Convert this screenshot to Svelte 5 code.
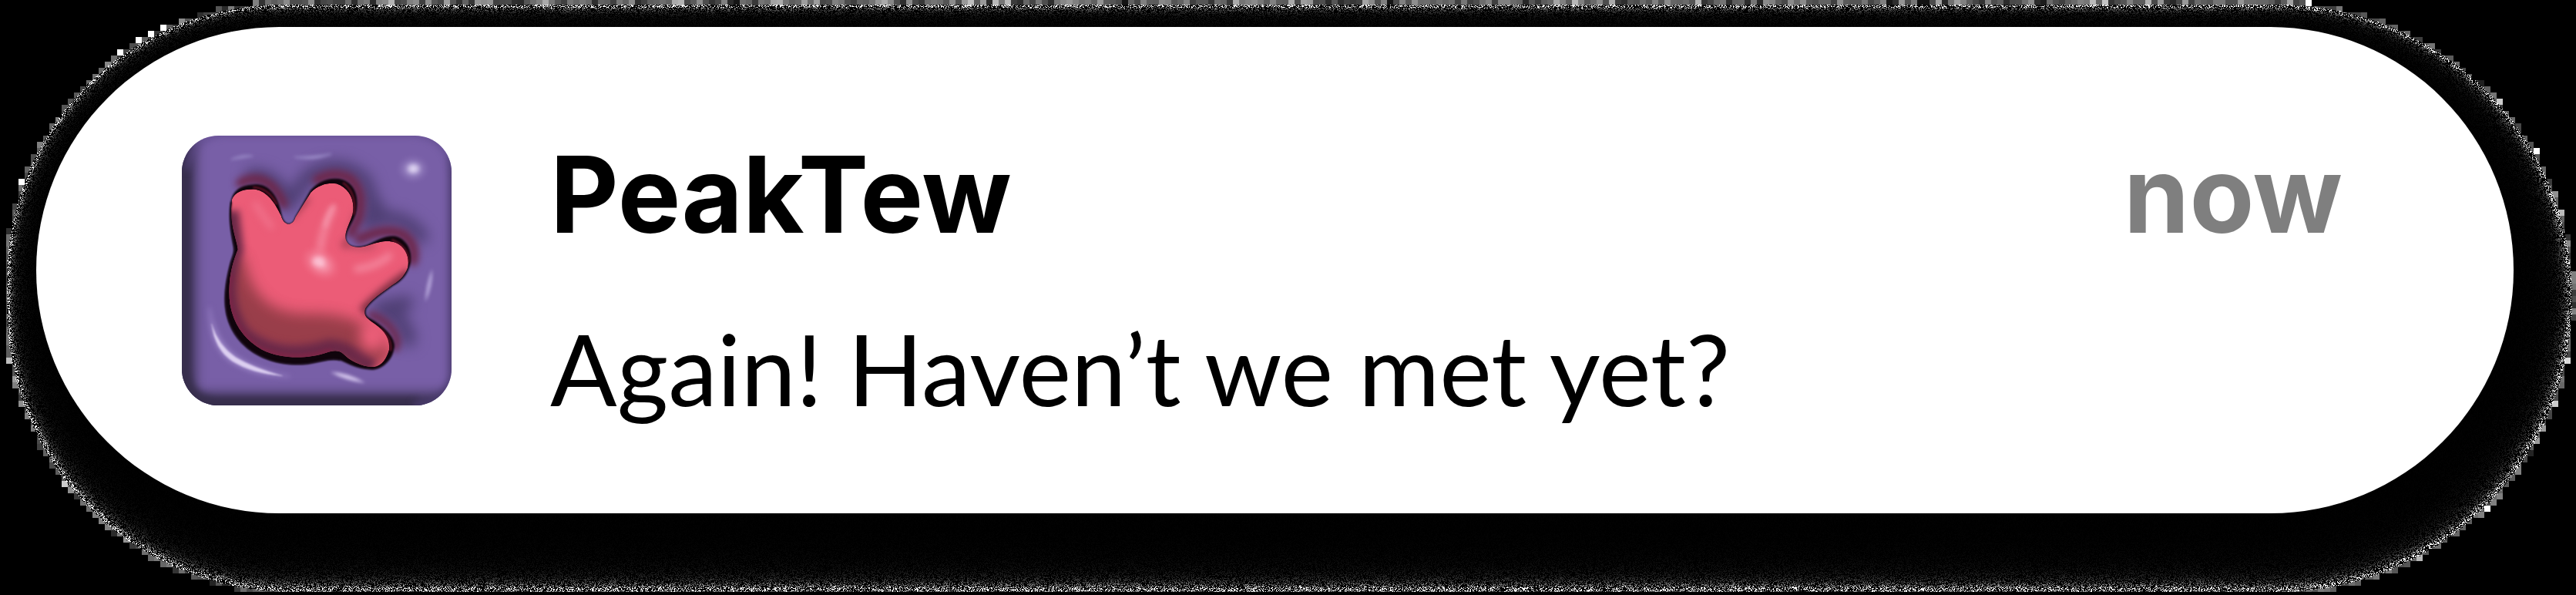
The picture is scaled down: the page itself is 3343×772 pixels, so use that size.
<script>
  import { onMount } from 'svelte';

  let grain;

  const BLOCK = 8;
  const CARD = { left: 47, top: 35, right: 81, bottom: 106 };
  const EDGE = { left: 9, top: 6, right: 6, bottom: 5 };

  function makeRandom(seed) {
    let s = seed;
    return () => {
      s = (s + 0x6d2b79f5) | 0;
      let t = Math.imul(s ^ (s >>> 15), 1 | s);
      t = (t + Math.imul(t ^ (t >>> 7), 61 | t)) ^ t;
      return ((t ^ (t >>> 14)) >>> 0) / 4294967296;
    };
  }

  // Depth inside a rounded box; negative when the point is outside it.
  function depth(x, y, l, t, r, b, radius) {
    const hw = (r - l) / 2;
    const hh = (b - t) / 2;
    const k = Math.min(radius, hw, hh);
    const qx = Math.abs(x - (l + r) / 2) - hw + k;
    const qy = Math.abs(y - (t + b) / 2) - hh + k;
    return k - Math.hypot(Math.max(qx, 0), Math.max(qy, 0)) - Math.min(Math.max(qx, qy), 0);
  }

  function paint() {
    const w = grain.clientWidth;
    const h = grain.clientHeight;
    if (!w || !h) return;
    grain.width = w;
    grain.height = h;
    const ctx = grain.getContext('2d');
    const image = ctx.createImageData(w, h);
    const out = new Uint32Array(image.data.buffer);
    const random = makeRandom(41);
    const grey = (v) => ((255 << 24) | (v << 16) | (v << 8) | v) >>> 0;

    for (let by = 0; by < h; by += BLOCK) {
      for (let bx = 0; bx < w; bx += BLOCK) {
        const empty = [];
        let sum = 0;
        let count = 0;
        for (let y = by; y < Math.min(by + BLOCK, h); y++) {
          for (let x = bx; x < Math.min(bx + BLOCK, w); x++) {
            const radius = x > w / 2 ? 380 : y < h / 2 ? 355 : 368;
            const d = depth(x, y, EDGE.left, EDGE.top, w - EDGE.right, h - EDGE.bottom, radius);
            if (d + random() * 2 - 1 <= 0) {
              empty.push(y * w + x);
              continue;
            }
            const c = -depth(x, y, CARD.left, CARD.top, w - CARD.right, h - CARD.bottom, 316);
            let v = 0;
            if (c > -3) {
              const scale = 3 + 0.045 * (Math.max(d, 0) + Math.max(c, 0));
              const level = 1 + Math.floor((Math.max(d, 0) / scale) ** 2 + random() * 0.8);
              v = random() < 0.38 ? Math.round(255 / level) : 0;
            }
            out[y * w + x] = grey(v);
            sum += v;
            count++;
          }
        }
        const mean = count ? Math.round(sum / count) : 0;
        for (const i of empty) out[i] = grey(mean);
      }
    }
    ctx.putImageData(image, 0, 0);
  }

  onMount(() => {
    paint();
    const watcher = new ResizeObserver(paint);
    watcher.observe(grain);
    return () => watcher.disconnect();
  });

  const blurs = [3, 6, 9, 14, 26];

  const groove =
    'M300 335C308 287 340 269 400 268C450 270 480 312 495 385C505 430 540 432 550 395L610 290C640 255 680 243 715 246C770 252 797 300 787 365C777 420 743 440 746 480C755 512 790 518 830 503C870 485 900 465 940 470C985 480 1007 530 995 580C985 620 960 645 930 660C890 690 850 715 825 750C815 775 830 785 850 795C900 825 945 870 932 910C925 950 890 985 850 987C790 985 760 965 725 950C690 940 650 955 600 963C500 975 400 945 340 880C262 795 268 690 300 570C310 540 315 530 312 510C300 450 292 400 300 335Z';
  const hand =
    'M303 325C315 295 350 283 395 286C440 295 470 335 495 390C505 430 540 430 550 395L610 298C640 268 680 258 710 264C760 280 785 330 772 385C757 430 742 450 746 480C755 512 790 518 830 505C880 488 910 483 940 493C980 510 995 550 988 590C975 625 950 645 925 660C885 690 845 715 822 750C815 775 825 785 845 800C890 830 920 860 915 910C905 945 890 970 855 978C800 975 760 950 735 925C715 908 690 915 670 922C600 945 500 950 420 910C330 860 285 770 293 660C297 600 310 560 326 520C322 480 290 420 303 325Z';
</script>

<main class="stage">
  <canvas class="grain" bind:this={grain} aria-hidden="true"></canvas>
  <article class="card">
    <svg class="icon" viewBox="108 77 1050 1050" role="img" aria-label="PeakTew">
      <defs>
        <clipPath id="tile"><rect x="108" y="77" width="1050" height="1050" rx="142" /></clipPath>
        <clipPath id="palm"><path d={hand} /></clipPath>
        {#each blurs as r}
          <filter id="b{r}" filterUnits="userSpaceOnUse" x="0" y="-30" width="1270" height="1270" color-interpolation-filters="sRGB"><feGaussianBlur stdDeviation={r} /></filter>
        {/each}
        <radialGradient id="glow"><stop offset="0" stop-color="#cdbfe6" /><stop offset=".35" stop-color="#a592cd" stop-opacity=".75" /><stop offset="1" stop-color="#7a5fa8" stop-opacity="0" /></radialGradient>
        <radialGradient id="shine"><stop offset="0" stop-color="#fbb9cc" /><stop offset=".4" stop-color="#f68ea5" stop-opacity=".75" /><stop offset="1" stop-color="#ef5f7a" stop-opacity="0" /></radialGradient>
      </defs>

      <g clip-path="url(#tile)">
        <rect x="108" y="77" width="1050" height="1050" fill="#785fa7" />
        <path d="M104 60V1136H1170" fill="none" stroke="#332b48" stroke-width="104" filter="url(#b26)" />
        <path d="M114 180V970Q114 1121 270 1121H1030" fill="none" stroke="#372e4c" stroke-width="46" filter="url(#b14)" />
        <path d="M1164 150V1010Q1150 1120 1010 1130" fill="none" stroke="#4a3b6d" stroke-width="34" filter="url(#b14)" />
        <path d="M130 210Q140 90 260 70H1010Q1140 80 1165 210" fill="none" stroke="#5b4888" stroke-width="14" filter="url(#b14)" />

        <g fill="none" stroke="#4f3f74" stroke-linecap="round" stroke-linejoin="round" filter="url(#b26)">
          <path d="M380 232Q470 225 525 340L600 235Q720 160 820 250Q860 330 830 420Q960 360 1040 470" stroke-width="56" />
          <path d="M880 380L830 300M980 730L880 750Q980 790 990 870" stroke-width="60" />
        </g>
        <g fill="none" stroke="#6d2649" stroke-linecap="round" filter="url(#b14)">
          <path d="M335 262Q370 240 415 248Q470 265 505 345" stroke-width="34" />
          <path d="M635 250Q700 210 765 245Q820 300 795 400L765 455" stroke-width="38" />
          <path d="M800 480Q900 430 970 462Q1022 500 1008 565" stroke-width="38" />
          <path d="M845 775Q920 800 945 870L940 905" stroke-width="28" />
        </g>

        <path d={groove} fill="#10040c" stroke="#10040c" stroke-width="3" filter="url(#b3)" />
        <path d="M735 260Q790 300 777 385M925 482Q990 510 992 570M385 278Q445 280 478 345M880 828Q930 870 920 915" fill="none" stroke="#541022" stroke-width="9" filter="url(#b3)" />

        <g clip-path="url(#palm)">
          <path d={hand} fill="#ec5c77" />
          <path d="M270 560Q320 860 620 850Q800 850 850 970" fill="none" stroke="#8b3942" stroke-width="160" filter="url(#b26)" opacity=".85" />
          <path d="M300 370L318 520Q250 710 345 845Q480 960 680 900Q740 895 850 980" fill="none" stroke="#6b2948" stroke-width="60" filter="url(#b14)" />
          <path d="M300 620Q265 780 400 900Q540 965 690 910" fill="none" stroke="#7a2446" stroke-width="16" filter="url(#b6)" />
          <path d="M1000 615Q895 685 815 765" fill="none" stroke="#7e2f43" stroke-width="48" filter="url(#b14)" />
          <path d="M530 400L600 320M775 470L735 510" fill="none" stroke="#a93f55" stroke-width="22" filter="url(#b14)" />
          <path d="M790 370L765 450M740 490Q780 525 860 505" fill="none" stroke="#b9485f" stroke-width="18" filter="url(#b14)" />
          <ellipse cx="848" cy="860" rx="46" ry="56" fill="#f0607b" filter="url(#b26)" />
          <path d="M695 365Q655 440 645 530M790 596Q870 585 915 545" fill="none" stroke="#f4869d" stroke-width="26" stroke-linecap="round" filter="url(#b14)" />
          <path d="M395 345Q425 390 455 430" fill="none" stroke="#f0708a" stroke-width="24" stroke-linecap="round" filter="url(#b14)" />
          <path d="M700 350Q675 390 665 430" fill="none" stroke="#f7a0b4" stroke-width="10" stroke-linecap="round" filter="url(#b9)" />
          <ellipse cx="648" cy="574" rx="92" ry="68" fill="url(#shine)" transform="rotate(35 648 574)" />
          <ellipse cx="640" cy="566" rx="22" ry="16" fill="#fbc0d2" filter="url(#b9)" />
        </g>
        <path d="M300 335C292 400 300 450 312 510C315 530 310 540 300 570C268 690 262 795 340 880C400 945 500 975 600 963C650 955 690 940 725 950" fill="none" stroke="#10040c" stroke-width="5" filter="url(#b3)" />

        <ellipse cx="1008" cy="207" rx="72" ry="62" fill="url(#glow)" />
        <ellipse cx="1010" cy="205" rx="20" ry="14" fill="#ddd2f0" filter="url(#b9)" />
        <path d="M300 170Q340 150 385 156Q345 162 300 170ZM545 160Q610 162 690 148Q620 176 545 160Z" fill="#b0a2d6" stroke="#9484c2" stroke-width="5" filter="url(#b6)" />
        <path d="M1082 595Q1088 660 1056 725Q1056 660 1082 595Z" fill="#b5a5da" filter="url(#b6)" />
        <path d="M215 745Q215 900 300 957Q390 1015 530 1014Q400 990 320 935Q240 880 215 745Z" fill="#a58fcf" stroke="#8a72b8" stroke-width="10" filter="url(#b9)" />
        <path d="M224 810Q236 910 305 955Q380 1002 500 1012Q385 980 318 940Q250 895 224 810Z" fill="#dccff0" stroke="#c3b2e0" stroke-width="2" filter="url(#b3)" />
        <path d="M690 998Q755 1000 818 1038Q745 1030 690 998Z" fill="#d8cbee" stroke="#b7a5db" stroke-width="3" filter="url(#b6)" />
      </g>
    </svg>

    <div class="body">
      <header class="head">
        <h1 class="name">PeakTew</h1>
        <time class="when">now</time>
      </header>
      <p class="message">Again! Haven’t we met yet?</p>
    </div>
  </article>
</main>

<style>
  :global(body) {
    background: #000;
  }
  .stage {
    position: relative;
    box-sizing: border-box;
    padding: 35px 81px 106px 47px;
    font-family: Inter, 'Liberation Sans', sans-serif;
  }
  .grain {
    position: absolute;
    inset: 0;
    width: 100%;
    height: 100%;
  }
  .card {
    position: relative;
    display: flex;
    gap: 128px;
    padding: 141px 222px 114px 189px;
    border-radius: 316px;
    background: #fff;
  }
  .icon {
    flex: none;
    width: 350px;
    height: 350px;
  }
  .body {
    flex: 1;
    min-width: 0;
  }
  .head {
    display: flex;
    justify-content: space-between;
  }
  .name,
  .when {
    margin: 0;
    font-size: 137px;
    line-height: 152px;
    font-weight: 700;
    color: #000;
  }
  .when {
    color: #7f7f7f;
  }
  .message {
    margin: 76px 0 0;
    font-family: Lato, 'Liberation Sans', sans-serif;
    font-size: 128px;
    line-height: 148px;
    color: #000;
    white-space: nowrap;
  }
</style>
